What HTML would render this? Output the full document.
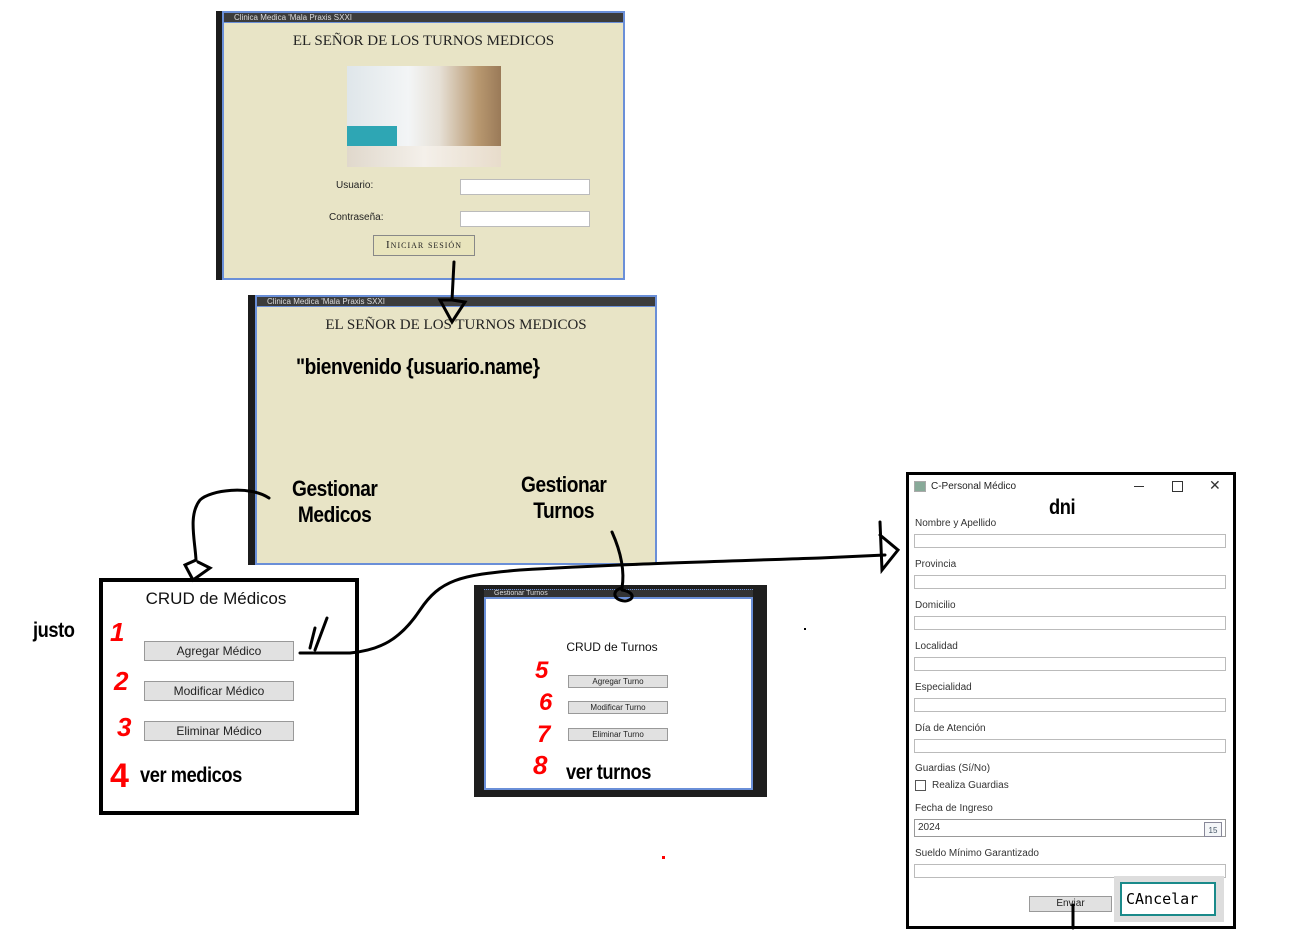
<!DOCTYPE html>
<html><head><meta charset="utf-8"><style>
body{margin:0;width:1304px;height:931px;background:#fff;position:relative;overflow:hidden;font-family:"Liberation Sans",sans-serif}
.a{position:absolute}
.tb{background:#3c3c3c;height:9px;border-bottom:1px solid #6a8fd8}
.tt{font-size:8px;color:#ddd;position:absolute;left:10px;top:0;line-height:9px}
.serif{font-family:"Liberation Serif",serif;color:#222}
.inp{position:absolute;background:#fff;border:1px solid #bbb;box-sizing:border-box}
.btn{position:absolute;background:#e1e1e1;border:1px solid #999;box-sizing:border-box;text-align:center;font-size:12px;color:#222}
.imp{position:absolute;font-family:"Liberation Sans",sans-serif;font-weight:bold;color:#000;letter-spacing:-0.5px;transform:scaleX(0.87);transform-origin:0 0;white-space:nowrap}
.red{position:absolute;color:#f00;font-family:"Liberation Sans",sans-serif;font-weight:bold;font-style:italic}
.lbl{position:absolute;left:915px;font-size:10px;color:#333}
.fi{position:absolute;left:914px;width:312px;height:14px;border:1px solid #bbb;box-sizing:border-box;background:#fff}
</style></head><body>

<div class="a" style="left:216px;top:11px;width:7px;height:269px;background:#1c1c1c"></div>
<div class="a" style="left:222px;top:11px;width:403px;height:269px;background:#e8e4c6;border:2px solid #6a8fd8;box-sizing:border-box">
 <div class="tb"><span class="tt">Clinica Medica 'Mala Praxis SXXI</span></div>
</div>
<div class="a serif" style="left:222px;top:33px;width:403px;text-align:center;font-size:15px">EL SEÑOR DE LOS TURNOS MEDICOS</div>
<div class="a" style="left:347px;top:66px;width:154px;height:101px;background:linear-gradient(90deg,#dfe6ea 0%,#f3f5f6 40%,#e6e0d6 60%,#b89870 85%,#9a7a58 100%)">
 <div class="a" style="left:0;top:60px;width:50px;height:30px;background:#2ea6b4"></div>
 <div class="a" style="left:0;top:80px;width:154px;height:21px;background:linear-gradient(90deg,#e0d8cc,#f4f0ea,#e8dccb)"></div>
</div>
<div class="a" style="left:336px;top:180px;font-size:10px;color:#222">Usuario:</div>
<div class="inp" style="left:460px;top:179px;width:130px;height:16px"></div>
<div class="a" style="left:329px;top:212px;font-size:10px;color:#222">Contraseña:</div>
<div class="inp" style="left:460px;top:211px;width:130px;height:16px"></div>
<div class="a serif" style="left:373px;top:235px;width:102px;height:21px;border:1px solid #888;background:#e8e4bc;box-sizing:border-box;text-align:center;font-size:11px;line-height:19px;font-variant:small-caps;letter-spacing:1px">Iniciar sesión</div>

<div class="a" style="left:248px;top:295px;width:8px;height:270px;background:#1c1c1c"></div>
<div class="a" style="left:255px;top:295px;width:402px;height:270px;background:#e8e4c6;border:2px solid #6a8fd8;box-sizing:border-box">
 <div class="tb"><span class="tt">Clinica Medica 'Mala Praxis SXXI</span></div>
</div>
<div class="a serif" style="left:255px;top:317px;width:402px;text-align:center;font-size:15px">EL SEÑOR DE LOS TURNOS MEDICOS</div>
<div class="imp" style="left:296px;top:354px;font-size:22px">"bienvenido {usuario.name}</div>
<div class="imp" style="left:292px;top:476px;font-size:22px;line-height:26px;text-align:center;width:98px">Gestionar<br>Medicos</div>
<div class="imp" style="left:521px;top:472px;font-size:22px;line-height:26px;text-align:center;width:98px">Gestionar<br>Turnos</div>

<div class="a" style="left:99px;top:578px;width:260px;height:237px;border:4px solid #000;box-sizing:border-box"></div>
<div class="a" style="left:99px;top:589px;width:234px;text-align:center;font-size:17px;color:#111">CRUD de Médicos</div>
<div class="btn" style="left:144px;top:641px;width:150px;height:20px;line-height:18px">Agregar Médico</div>
<div class="btn" style="left:144px;top:681px;width:150px;height:20px;line-height:18px">Modificar Médico</div>
<div class="btn" style="left:144px;top:721px;width:150px;height:20px;line-height:18px">Eliminar Médico</div>
<div class="red" style="left:110px;top:617px;font-size:26px">1</div>
<div class="red" style="left:114px;top:666px;font-size:26px">2</div>
<div class="red" style="left:117px;top:712px;font-size:26px">3</div>
<div class="red" style="left:110px;top:757px;font-size:34px;font-style:normal">4</div>
<div class="imp" style="left:140px;top:764px;font-size:21px">ver medicos</div>
<div class="imp" style="left:33px;top:619px;font-size:21px">justo</div>

<div class="a" style="left:474px;top:585px;width:293px;height:212px;background:#1e1e1e"></div>
<div class="a" style="left:484px;top:589px;width:269px;height:8px;background:#333;border-top:1px dotted #6a8fd8"><span class="tt" style="font-size:7px;left:10px;line-height:8px">Gestionar Turnos</span></div>
<div class="a" style="left:484px;top:597px;width:269px;height:193px;background:#fff;border:2px solid #6a8fd8;box-sizing:border-box"></div>
<div class="a" style="left:484px;top:640px;width:256px;text-align:center;font-size:12px;color:#111">CRUD de Turnos</div>
<div class="btn" style="left:568px;top:675px;width:100px;height:13px;font-size:8px;line-height:11px">Agregar Turno</div>
<div class="btn" style="left:568px;top:701px;width:100px;height:13px;font-size:8px;line-height:11px">Modificar Turno</div>
<div class="btn" style="left:568px;top:728px;width:100px;height:13px;font-size:8px;line-height:11px">Eliminar Turno</div>
<div class="red" style="left:535px;top:657px;font-size:24px">5</div>
<div class="red" style="left:539px;top:689px;font-size:24px">6</div>
<div class="red" style="left:537px;top:721px;font-size:24px">7</div>
<div class="red" style="left:533px;top:750px;font-size:26px">8</div>
<div class="imp" style="left:566px;top:761px;font-size:21px">ver turnos</div>

<div class="a" style="left:906px;top:472px;width:330px;height:457px;border:3px solid #000;box-sizing:border-box;background:#fff"></div>
<div class="a" style="left:914px;top:481px;width:10px;height:9px;background:#8a9;border:1px solid #aaa"></div>
<div class="a" style="left:931px;top:481px;font-size:10px;color:#222">C-Personal Médico</div>
<div class="a" style="left:1134px;top:486px;width:10px;height:1px;background:#333"></div>
<div class="a" style="left:1172px;top:481px;width:9px;height:9px;border:1px solid #333"></div>
<div class="a" style="left:1209px;top:477px;font-size:14px;color:#333">✕</div>
<div class="imp" style="left:1049px;top:496px;font-size:21px">dni</div>
<div class="lbl" style="top:518px">Nombre y Apellido</div><div class="fi" style="top:534px"></div>
<div class="lbl" style="top:559px">Provincia</div><div class="fi" style="top:575px"></div>
<div class="lbl" style="top:600px">Domicilio</div><div class="fi" style="top:616px"></div>
<div class="lbl" style="top:641px">Localidad</div><div class="fi" style="top:657px"></div>
<div class="lbl" style="top:682px">Especialidad</div><div class="fi" style="top:698px"></div>
<div class="lbl" style="top:723px">Día de Atención</div><div class="fi" style="top:739px"></div>
<div class="lbl" style="top:763px">Guardias (Sí/No)</div>
<div class="a" style="left:915px;top:780px;width:11px;height:11px;border:1px solid #555;box-sizing:border-box"></div>
<div class="a" style="left:932px;top:780px;font-size:10px;color:#333">Realiza Guardias</div>
<div class="lbl" style="top:803px">Fecha de Ingreso</div>
<div class="fi" style="top:819px;height:18px;border-color:#999"><span style="position:absolute;left:3px;top:2px;font-size:10px;color:#333">2024</span>
 <div class="a" style="left:289px;top:2px;width:16px;height:13px;border:1px solid #889;font-size:8px;text-align:center;line-height:16px;color:#456;background:#f4f6f8">15</div></div>
<div class="lbl" style="top:848px">Sueldo Mínimo Garantizado</div><div class="fi" style="top:864px"></div>
<div class="btn" style="left:1029px;top:896px;width:83px;height:16px;font-size:10px;line-height:14px">Enviar</div>
<div class="a" style="left:1114px;top:876px;width:110px;height:46px;background:#ddd"></div>
<div class="a" style="left:1120px;top:882px;width:96px;height:34px;background:#fff;border:2px solid #1a8a8a;box-sizing:border-box;font-family:'DejaVu Sans Mono',monospace;font-size:15px;line-height:30px;padding-left:4px">CAncelar</div>

<svg class="a" style="left:0;top:0" width="1304" height="931">
<g fill="none" stroke="#000" stroke-width="3" stroke-linecap="round">
<path d="M454 262 L452 300 L440 300 L452 322 L465 302 L452 300"/>
<path d="M269 498 C250 485 210 490 200 500 C188 515 195 540 196 560 L185 565 L193 580 L210 568 L198 562"/>
<path d="M300 653 L350 653 C380 650 400 640 420 610 C440 580 460 575 520 570 C600 565 700 562 820 558 L885 555"/>
<path d="M880 522 L882 570 L898 550 L880 535"/>
<path d="M310 648 L315 628 M315 650 L327 618"/>
<path d="M612 532 C620 550 625 570 622 588 C612 590 612 600 625 601 C635 600 635 592 622 590"/>
<path d="M1073 905 L1073 928"/>
</g></svg>
<div class="a" style="left:804px;top:628px;width:2px;height:2px;background:#000"></div>
<div class="a" style="left:662px;top:856px;width:3px;height:3px;background:#f00"></div>
</body></html>
